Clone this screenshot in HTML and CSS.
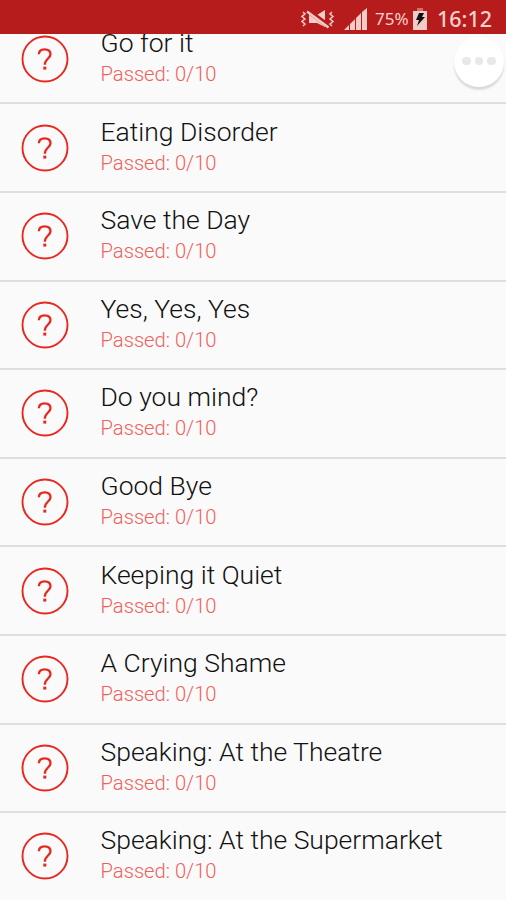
FILE: index.html
```html
<!DOCTYPE html>
<html lang="en">
<head>
  <meta charset="UTF-8" />
  <meta name="viewport" content="width=device-width, initial-scale=1.0"/>
  <title>Lessons</title>
  <link rel="stylesheet" href="styles.css">
</head>
<body>

<svg class="defs">
  <symbol id="question" viewBox="0 0 48 48">
    <circle cx="24" cy="24" r="22.5"/>
    <path class="mark" d="M17.9 19.3C17.9 16 20.2 14.3 23.6 14.3C27.2 14.3 29.5 16.2 29.5 19.3C29.5 23.6 23.8 23.6 23.8 29.8"/>
    <path class="dot" d="M22.3 31.6h3v3h-3z"/>
  </symbol>
</svg>

<header class="status-bar">
  <svg class="mute" viewBox="0 0 34 20">
    <path class="fill" d="M8 6h8l8-5v17l-8-4H8z"/>
    <path class="cut" d="M6 1L29 18"/>
    <path class="line" d="M6 2.5L27.5 18.5"/>
    <path class="wave" d="M2 3l2 2-3 2.5 3 2.5-3 2.5 3 2.5-2 2M31 3l-2 2 3 2.5-3 2.5 3 2.5-3 2.5 2 2"/>
  </svg>
  <svg class="signal" viewBox="0 0 24 24">
    <path d="M0 23l5-5v5zM6 23v-6l5-5v11zM12 23V11l5-5v17zM18 23V5l5-4v22z"/>
  </svg>
  <span class="percent">75%</span>
  <svg class="battery" viewBox="0 0 16 22">
    <path class="top" d="M5 0h6v3H5z"/>
    <path class="fill" d="M1 3h14v19H1z"/>
    <path class="bolt" d="M7 5h5l-2 4h3l-8 9 2-6H4z"/>
  </svg>
  <span class="clock">16:12</span>
</header>

<button class="more"><i></i><i></i><i></i></button>

<!-- LESSONS -->
<ul class="lessons">
  <li class="lesson">
    <svg class="icon"><use href="#question"/></svg>
    <div><p class="name">Go for it</p><p class="passed">Passed: 0/10</p></div>
  </li>
  <li class="lesson">
    <svg class="icon"><use href="#question"/></svg>
    <div><p class="name">Eating Disorder</p><p class="passed">Passed: 0/10</p></div>
  </li>
  <li class="lesson">
    <svg class="icon"><use href="#question"/></svg>
    <div><p class="name">Save the Day</p><p class="passed">Passed: 0/10</p></div>
  </li>
  <li class="lesson">
    <svg class="icon"><use href="#question"/></svg>
    <div><p class="name">Yes, Yes, Yes</p><p class="passed">Passed: 0/10</p></div>
  </li>
  <li class="lesson">
    <svg class="icon"><use href="#question"/></svg>
    <div><p class="name">Do you mind?</p><p class="passed">Passed: 0/10</p></div>
  </li>
  <li class="lesson">
    <svg class="icon"><use href="#question"/></svg>
    <div><p class="name">Good Bye</p><p class="passed">Passed: 0/10</p></div>
  </li>
  <li class="lesson">
    <svg class="icon"><use href="#question"/></svg>
    <div><p class="name">Keeping it Quiet</p><p class="passed">Passed: 0/10</p></div>
  </li>
  <li class="lesson">
    <svg class="icon"><use href="#question"/></svg>
    <div><p class="name">A Crying Shame</p><p class="passed">Passed: 0/10</p></div>
  </li>
  <li class="lesson">
    <svg class="icon"><use href="#question"/></svg>
    <div><p class="name">Speaking: At the Theatre</p><p class="passed">Passed: 0/10</p></div>
  </li>
  <li class="lesson">
    <svg class="icon"><use href="#question"/></svg>
    <div><p class="name">Speaking: At the Supermarket</p><p class="passed">Passed: 0/10</p></div>
  </li>
</ul>

</body>
</html>
```

FILE: styles.css
```css
*{box-sizing:border-box}

body {
  margin:0;
  height:900px;
  overflow:hidden;
  font-family:Roboto,sans-serif;
  background:#fafafa;
}

p {margin:0}
.defs {display:none}

.status-bar {
  position:relative;
  z-index:2;
  display:flex;
  align-items:center;
  height:34px;
  padding:3px 14px 0 0;
  justify-content:flex-end;
  background:#b71c1c;
  color:#f6d0cc;
  font-family:"Noto Sans",sans-serif;
}

.status-bar svg {fill:#f3cbc7}
.mute {width:34px;height:20px;margin-right:9px}
.mute .cut {stroke:#b71c1c;stroke-width:5}
.mute .line {stroke:#f3cbc7;stroke-width:2.4}
.mute .wave {fill:none;stroke:#f3cbc7;stroke-width:1.5}
.signal {width:24px;height:24px;margin-right:7px}
.percent {width:34px;font-size:17px;white-space:nowrap}
.battery {width:16px;height:22px;margin:0 9px 0 3px}
.battery .top {fill:#d0716c}
.battery .bolt {fill:#111}
.clock {width:55px;font-size:21.5px;font-weight:500;white-space:nowrap}

/* floating menu button */
.more {
  position:absolute;
  z-index:1;
  top:37px;
  right:2px;
  width:50px;
  height:50px;
  padding:0 0 2px;
  border:none;
  border-radius:50%;
  background:#fff;
  box-shadow:0 3px 2px rgba(0,0,0,.13);
  display:flex;
  align-items:center;
  justify-content:center;
  gap:4px;
}

.more i {
  width:8.5px;
  height:8.5px;
  border-radius:50%;
  background:#e8e8e8;
}

/* scrolled a little, the first row slides under the status bar */
.lessons {
  list-style:none;
  margin:-18.2px 0 0;
  padding:0;
}

.lesson {
  display:flex;
  align-items:center;
  gap:32px;
  height:88.6px;
  padding-left:20.5px;
  border-bottom:2px solid #dedede;
}

.lesson:last-child {border-color:transparent}

.icon {
  width:48px;
  height:48px;
  fill:none;
  stroke:#e8281f;
  stroke-width:1.9;
}

.mark {stroke-width:2.3}
.dot {fill:#e8281f;stroke:none}

.name {
  margin-top:-2px;
  font-size:26.5px;
  font-weight:300;
  line-height:32px;
  color:#111;
}

.passed {
  font-size:20.2px;
  font-weight:300;
  line-height:30px;
  color:#f0605a;
}
```
